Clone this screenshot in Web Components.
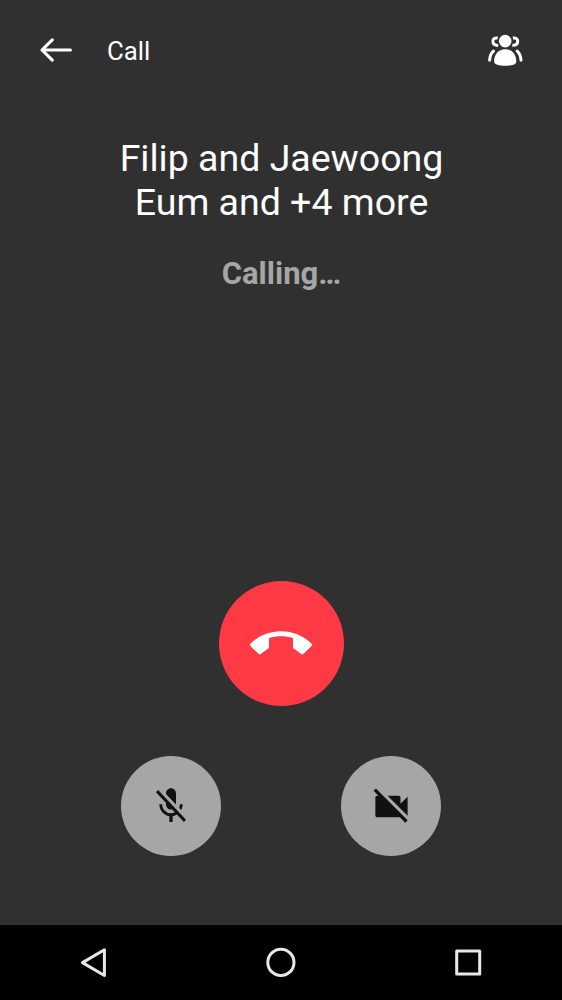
<!DOCTYPE html>
<html lang="en">
<head>
<meta charset="utf-8">
<title>Call</title>
<style>
html,body{margin:0;height:100%;background:#303030}
body{font-family:Roboto,"Noto Sans",sans-serif}
</style>
</head>
<body>
<call-screen></call-screen>
<script>
const define = (name, html) => customElements.define(name, class extends HTMLElement {
  constructor() {
    super();
    this.attachShadow({ mode: 'open' }).innerHTML = html;
  }
});

define('call-header', `
<style>
:host{display:flex;align-items:center;height:100px;padding:0 38px;box-sizing:border-box;color:#fff}
svg{display:block}
.title{flex:1;margin-left:32.500px;font-size:26px;line-height:30px;padding-top:2px}
.title span{display:inline-block;transform-origin:0 50%;transform:scaleX(.99)}
</style>
<svg width="36" height="30" viewBox="38 35 36 30" fill="none" stroke="#fff" stroke-width="3.1" stroke-linecap="round" stroke-linejoin="round"><path d="M70.4 50H42M52.3 39.8L42 50l10.3 10.2"/></svg>
<div class="title"><span><slot></slot></span></div>
<svg width="38" height="36" viewBox="486 32 38 36" fill="#fff">
<circle cx="505.2" cy="41.1" r="6.3"/>
<path d="M494.1 61.5c0-7.4 4.5-12.3 11.100-12.300s11.100 4.900 11.100 12.300c0 3.100-5 4.300-11.100 4.300s-11.100-1.200-11.100-4.300z"/>
<g fill="none" stroke="#fff" stroke-width="3"><path stroke-linecap="round" d="M489.600 60.300c.2-4 1.500-7.200 3.800-9.200M521 60.300c-.2-4-1.500-7.200-3.800-9.200"/><path d="M497.700 38c-2.800-.5-4.800 1-4.800 3.200 0 2.500 2.200 4.100 5.300 4.300M512.900 38c2.800-.5 4.800 1 4.800 3.200 0 2.500-2.200 4.100-5.300 4.300"/></g>
</svg>`);

define('call-info', `
<style>
:host{display:flex;flex-direction:column;align-items:center;padding:36px 0 0 1px;text-align:center}
.name{font-size:37.5px;line-height:44px;color:#fff;width:345px}
.status{font-size:31px;line-height:36px;font-weight:700;color:#a6a6a6;margin-top:32px}
</style>
<div class="name"><slot name="name"></slot></div>
<div class="status"><slot name="status"></slot></div>`);

define('round-button', `
<style>
:host{display:flex;align-items:center;justify-content:center;border-radius:50%;width:var(--size,100px);height:var(--size,100px);background:var(--fill,#a6a6a6)}
</style><slot></slot>`);

define('call-controls', `
<style>
:host{display:flex;flex-direction:column;align-items:center;gap:50px;padding:0 0 69px}
.end{--size:125px;--fill:#ff3a44}
.row{display:flex;gap:120.500px}
svg{display:block}
</style>
<round-button class="end"><svg width="64" height="28" viewBox="249 629.500 64 28" fill="#fff"><path d="M250.400 643.200C258 635.600 269 630.800 281 630.800s23 4.800 30.600 12.400q1 1.100 0 2.200l-8.300 8.200q-.8.700-1.700.100l-7.900-5.700q-.7-.5-.7-1.400v-9c-7.700-2.400-16.300-2.400-24 0v9q0 .9-.7 1.400l-7.900 5.700q-.9.600-1.700-.100l-8.300-8.200q-1-1.100 0-2.200z"/></svg></round-button>
<div class="row">
<round-button><svg width="40" height="44" viewBox="0 -.4 24 24.800" preserveAspectRatio="none" fill="#111"><path d="M19 11h-1.700c0 .74-.16 1.430-.43 2.050l1.230 1.230c.56-.98.9-2.090.9-3.280zm-4.020.17c0-.06.02-.11.02-.17V5c0-1.660-1.340-3-3-3S9 3.340 9 5v.18l5.980 5.990zM4.270 3L3 4.270l6.010 6.010V11c0 1.660 1.330 3 2.990 3 .22 0 .44-.03.65-.08l1.660 1.660c-.71.33-1.500.52-2.310.52-2.760 0-5.300-2.100-5.300-5.100H5c0 3.410 2.720 6.230 6 6.720V21h2v-3.280c.91-.13 1.770-.45 2.540-.9L19.730 21 21 19.730 4.270 3z"/></svg></round-button>
<round-button><svg width="43" height="43" viewBox="0 0 24 24" fill="#111"><path d="M21 6.500l-4 4V7c0-.55-.45-1-1-1H9.820L21 17.180V6.500zM3.270 2L2 3.270 4.730 6H4c-.55 0-1 .45-1 1v10c0 .55.45 1 1 1h12c.21 0 .39-.08.54-.18L19.730 21 21 19.730 3.270 2z"/></svg></round-button>
</div>`);

define('system-nav', `
<style>
:host{display:flex;align-items:center;justify-content:space-between;height:75px;box-sizing:border-box;padding:0 78px;background:#000}
svg{display:block}
g{fill:none;stroke:#e8e8e8;stroke-width:3;stroke-linejoin:round}
</style>
<svg width="32" height="35" viewBox="78 945 32 35"><g><path d="M82.500 962.600L104.400 949.700V975.500z"/></g></svg>
<svg width="32" height="35" viewBox="265 945 32 35"><g><circle cx="280.900" cy="962.400" r="13.100"/></g></svg>
<svg width="32" height="35" viewBox="452 945 32 35"><g><path d="M456.700 950.900h23v23h-23z"/></g></svg>`);

define('call-screen', `
<style>
:host{display:flex;flex-direction:column;height:1000px;background:#303030}
call-info{flex:1}
</style>
<call-header>Call</call-header>
<call-info><span slot="name">Filip and Jaewoong<br>Eum and +4 more</span><span slot="status">Calling…</span></call-info>
<call-controls></call-controls>
<system-nav></system-nav>`);
</script>
</body>
</html>
